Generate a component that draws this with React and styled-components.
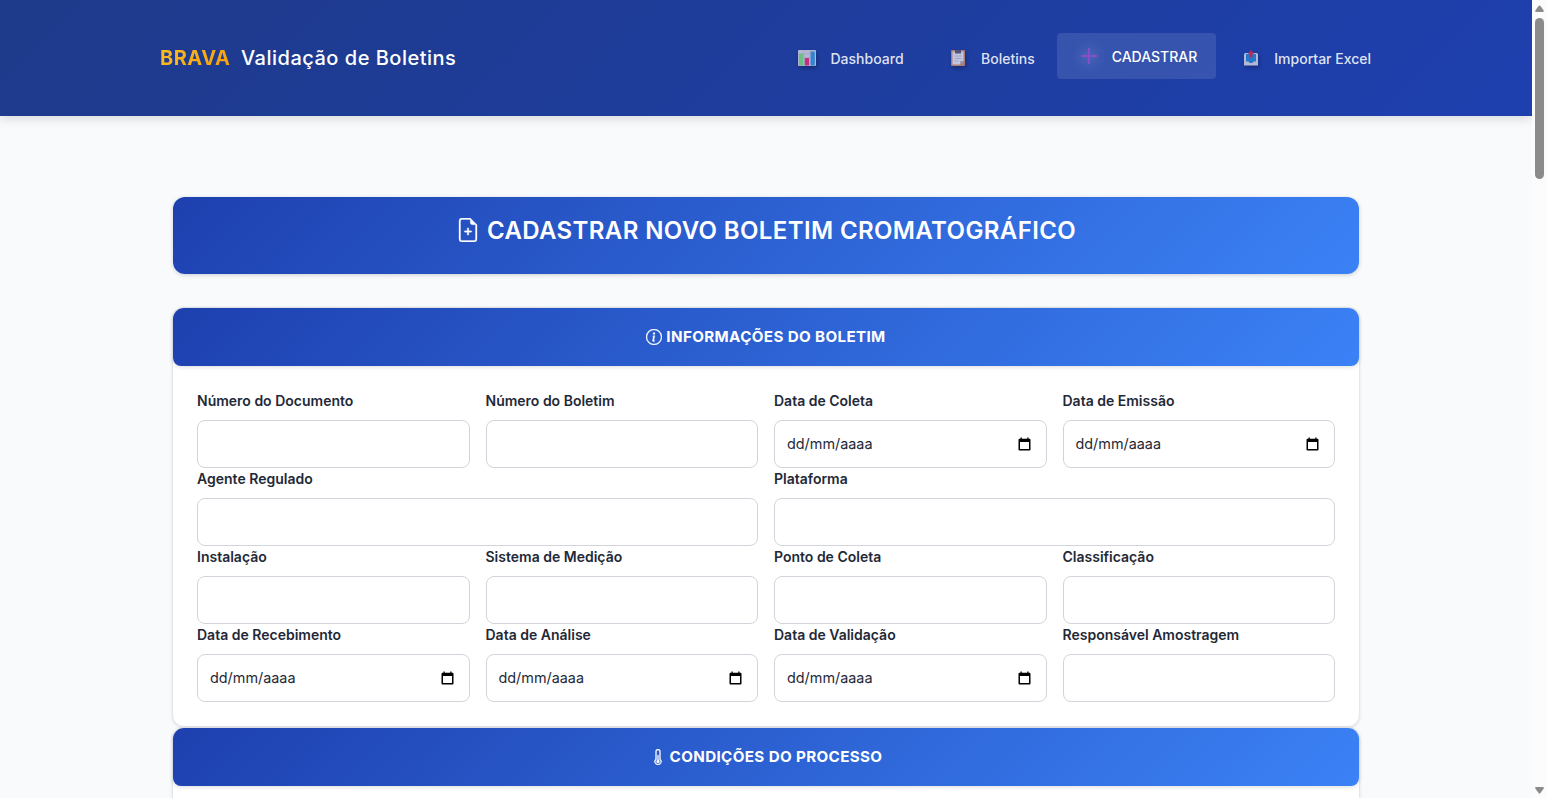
import React from 'react';
import styled, { createGlobalStyle, css } from 'styled-components';
import { BsFileEarmarkPlus, BsInfoCircle, BsThermometerHalf } from 'react-icons/bs';

const GlobalStyle = createGlobalStyle`
  *, *::before, *::after { box-sizing: border-box; }
  body {
    margin: 0;
    font-family: Inter, "Liberation Sans", sans-serif;
    color: #1f2937;
    background: #f9fafc;
    overflow: hidden;
  }
`;

const Window = styled.div`
  display: flex;
  height: 798px;
  overflow: hidden;
`;

const Page = styled.div`
  flex: 1;
  min-width: 0;
  height: 100%;
  overflow: hidden;
`;

const Header = styled.header`
  height: 116px;
  padding: 33px 143px 0 160px;
  display: flex;
  align-items: flex-start;
  justify-content: space-between;
  background: linear-gradient(135deg, #1e3a8a 0%, #1e40af 100%);
  box-shadow: 0 3px 10px rgba(0, 0, 0, 0.13);
`;

const Brand = styled.div`
  display: flex;
  align-items: center;
  gap: 10.5px;
  height: 50px;
  font-size: 20px;
  font-weight: 500;
  letter-spacing: 0.5px;
  color: #fff;
  white-space: nowrap;
`;

const BrandMark = styled.span`
  font-weight: 700;
  background: linear-gradient(135deg, #fbbf24, #f59e0b);
  background-clip: text;
  -webkit-background-clip: text;
  color: transparent;
`;

const Nav = styled.nav`
  display: flex;
  gap: 6px;
`;

const NavLink = styled.a`
  display: flex;
  align-items: center;
  height: 46px;
  padding: 0 18px;
  gap: 11.5px;
  border-radius: 4px;
  font-size: 14px;
  font-weight: 500;
  color: rgba(255, 255, 255, 0.87);
  white-space: nowrap;
  margin-top: 2px;
  ${(p) =>
    p.$active &&
    css`
      margin: 0 -1.5px;
      padding: 0 19px 0 20px;
      gap: 10.5px;
      color: #fff;
      background: rgba(255, 255, 255, 0.11);
    `}
`;

const NavIcon = styled.span`
  display: flex;
  width: 24px;
  height: 24px;
  align-items: center;
  justify-content: center;
  opacity: 0.82;
  filter: drop-shadow(1px 2px 2px rgba(0, 0, 0, 0.35));
  ${(p) =>
    p.$glow &&
    css`
      opacity: 0.8;
      filter: drop-shadow(0 0 7px rgba(255, 255, 255, 0.6));
    `}
`;

const Main = styled.main`
  padding: 81px 172px 0;
`;

const blueBand = css`
  display: flex;
  justify-content: center;
  color: #fff;
  background: linear-gradient(135deg, #1e40af 0%, #3b82f6 100%);
  text-transform: uppercase;
  white-space: nowrap;
`;

const TitleBanner = styled.h1`
  ${blueBand}
  margin: 0 1px 33px;
  height: 77px;
  padding-top: 19px;
  gap: 7px;
  font-size: 24px;
  font-weight: 600;
  line-height: 30px;
  letter-spacing: 0.38px;
  border-radius: 12px;
  box-shadow: 0 1px 4px rgba(0, 0, 0, 0.18);
  svg {
    margin-top: 2px;
    stroke: #fff;
    stroke-width: 0.2px;
  }
`;

const Card = styled.section`
  border: 1px solid #e5e7eb;
  border-radius: 12px;
  background: #fff;
  box-shadow: 0 1px 3px rgba(0, 0, 0, 0.1);
`;

const CardHeader = styled.h2`
  ${blueBand}
  align-items: center;
  margin: 0;
  height: 58px;
  padding-bottom: 1px;
  gap: 4px;
  font-size: 15.2px;
  font-weight: 700;
  letter-spacing: 0.36px;
  border-radius: 11px 11px 8px 8px;
  box-shadow: 0 1px 4px rgba(0, 0, 0, 0.14);
  svg { stroke: #fff; stroke-width: 0.3px; }
`;

const Grid = styled.div`
  display: grid;
  grid-template-columns: repeat(4, 1fr);
  column-gap: 16px;
  padding: 24px;
  min-height: 60px;
`;

const Field = styled.label`
  display: flex;
  flex-direction: column;
  gap: 8px;
  min-width: 0;
  grid-column: span ${(p) => p.$span || 1};
`;

const FieldName = styled.span`
  font-size: 14px;
  font-weight: 600;
  line-height: 22px;
  color: #1f2937;
`;

const control = css`
  width: 100%;
  height: 48px;
  padding: 0 12px;
  border: 1px solid #d1d5db;
  border-radius: 8px;
  background: #fff;
  color: #1f2937;
`;

const TextInput = styled.input`
  ${control}
  outline: none;
`;

const DateControl = styled.span`
  ${control}
  display: flex;
  align-items: center;
  justify-content: space-between;
  padding-right: 15px;
  font-size: 14.4px;
  line-height: 18px;
`;

const Scrollbar = styled.div`
  width: 15px;
  height: 100%;
  padding: 5px 3px 4px;
  display: flex;
  flex-direction: column;
  align-items: center;
  background: #fcfcfc;
`;

const Thumb = styled.div`
  width: 9px;
  height: 161px;
  margin: 6px 0 auto;
  border-radius: 5px;
  background: #8b8b8b;
`;

const ChartIcon = () => (
  <svg width="18" height="16" viewBox="0 0 18 16">
    <rect width="18" height="16" rx="1" fill="#d5d3e0" />
    <path d="M0 4h18M0 8h18M0 12h18M6 0v16M12 0v16" stroke="#b9b5cc" strokeWidth=".6" />
    <rect x="1" y="3.5" width="4.2" height="12" fill="#7fdc80" />
    <rect x="6.8" y="8" width="4.2" height="7.5" fill="#e12f79" />
    <rect x="12.6" y="1.5" width="4.2" height="14" fill="#3596dc" />
  </svg>
);

const ClipboardIcon = () => (
  <svg width="14" height="16" viewBox="0 0 14 16">
    <rect width="14" height="16" rx="1" fill="#c98b68" />
    <path d="M1.5 1.5h11V11l-3.5 3.5H1.5z" fill="#e6e3ee" />
    <path d="M12.5 11H9v3.5z" fill="#b5aec9" />
    <path d="M4 0h6v3.5H4z" fill="#5b5975" />
    <path d="M3.5 6h7M3.5 8.5h7M3.5 11h4" stroke="#b7b3c8" strokeWidth=".8" />
  </svg>
);

const PlusIcon = () => (
  <svg width="18" height="18" viewBox="0 0 18 18">
    <path d="M9 1v16M1 9h16" stroke="#9a4fd0" strokeWidth="2" />
  </svg>
);

const OutboxIcon = () => (
  <svg width="14" height="16" viewBox="0 0 14 16">
    <path d="M1.5 3h11Q14 3 14 4.5V15q0 .5-.5.5H.5Q0 15.5 0 15V4.5Q0 3 1.5 3z" fill="#d4d3e2" />
    <path d="M2 4h10v7.5H9.5l-1 1.5h-3l-1-1.5H2z" fill="#2685d2" />
    <path d="M7 0l3.2 3.7H8.4V7.5H5.6V3.7H3.8z" fill="#d7264e" />
  </svg>
);

const CalendarIcon = () => (
  <svg width="13" height="14" viewBox="0 0 13 14">
    <path
      fillRule="evenodd"
      fill="#000"
      d="M2.5 .5h1.3v1.200h5.400V.5h1.300v1.200h.9c.6 0 1.100.5 1.100 1.100v9.600c0 .6-.5 1.100-1.100 1.100h-9.800c-.6 0-1.100-.5-1.100-1.100V2.800c0-.6.5-1.100 1.100-1.100h.9zM2 5v7.100h9V5z"
    />
  </svg>
);

const Arrow = ({ down }) => (
  <svg width="9" height="7" viewBox="0 0 9 7">
    <path
      d={down ? 'M1 0h7q1.2.4.7 1.500L5.500 6q-1 1.200-2 0L.3 1.500Q-.2.400 1 0z' : 'M1 7h7q1.200-.4.700-1.500L5.500 1q-1-1.200-2 0L.3 5.500Q-.2 6.600 1 7z'}
      fill="#8b8b8b"
    />
  </svg>
);

const fields = [
  { name: 'Número do Documento' },
  { name: 'Número do Boletim' },
  { name: 'Data de Coleta', date: true },
  { name: 'Data de Emissão', date: true },
  { name: 'Agente Regulado', span: 2 },
  { name: 'Plataforma', span: 2 },
  { name: 'Instalação' },
  { name: 'Sistema de Medição' },
  { name: 'Ponto de Coleta' },
  { name: 'Classificação' },
  { name: 'Data de Recebimento', date: true },
  { name: 'Data de Análise', date: true },
  { name: 'Data de Validação', date: true },
  { name: 'Responsável Amostragem' },
];

const links = [
  { label: 'Dashboard', icon: <ChartIcon /> },
  { label: 'Boletins', icon: <ClipboardIcon /> },
  { label: 'CADASTRAR', icon: <PlusIcon />, active: true },
  { label: 'Importar Excel', icon: <OutboxIcon /> },
];

export default function App() {
  return (
    <Window>
      <GlobalStyle />
      <Page>
        <Header>
          <Brand>
            <BrandMark>BRAVA</BrandMark>
            <span>Validação de Boletins</span>
          </Brand>
          <Nav>
            {links.map((l) => (
              <NavLink key={l.label} $active={l.active}>
                <NavIcon $glow={l.active}>{l.icon}</NavIcon>
                {l.label}
              </NavLink>
            ))}
          </Nav>
        </Header>
        <Main>
          <TitleBanner>
            <BsFileEarmarkPlus size={24} />
            Cadastrar Novo Boletim Cromatográfico
          </TitleBanner>
          <Card>
            <CardHeader>
              <BsInfoCircle size={16} />
              Informações do Boletim
            </CardHeader>
            <Grid>
              {fields.map((f) => (
                <Field key={f.name} $span={f.span}>
                  <FieldName>{f.name}</FieldName>
                  {f.date ? (
                    <DateControl>
                      dd/mm/aaaa
                      <CalendarIcon />
                    </DateControl>
                  ) : (
                    <TextInput type="text" />
                  )}
                </Field>
              ))}
            </Grid>
          </Card>
          <Card>
            <CardHeader>
              <BsThermometerHalf size={16} />
              Condições do Processo
            </CardHeader>
            <Grid />
          </Card>
        </Main>
      </Page>
      <Scrollbar>
        <Arrow />
        <Thumb />
        <Arrow down />
      </Scrollbar>
    </Window>
  );
}
